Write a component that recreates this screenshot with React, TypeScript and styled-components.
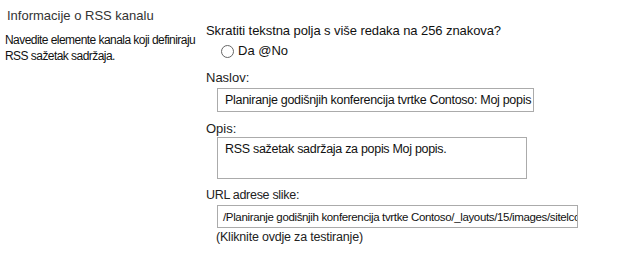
import React from "react";
import styled, { createGlobalStyle } from "styled-components";

const Global = createGlobalStyle`
  html, body { margin: 0; padding: 0; background: #fff; }
  body { font-family: "Liberation Sans", Arial, sans-serif; font-size: 13px; color: #222; }
`;

const Page = styled.div`
  display: flex;
  width: 624px;
  height: 256px;
  overflow: hidden;
`;

const Left = styled.div`
  width: 200px;
  flex: none;
  padding: 8px 0 0 5px;
  box-sizing: border-box;
`;

const SectionTitle = styled.div`
  padding-left: 2px;
  color: #333;
  line-height: 16px;
  margin-bottom: 8px;
`;

const Description = styled.div`
  color: #111;
  line-height: 16px;
  font-size: 12px;
  letter-spacing: -0.55px;
  white-space: nowrap;
`;

const Right = styled.div`
  flex: 1;
  padding: 23px 0 0 6px;
  display: flex;
  flex-direction: column;
`;

const Question = styled.div`
  color: #111;
  line-height: 16px;
  letter-spacing: -0.08px;
`;

const RadioRow = styled.label`
  display: flex;
  align-items: center;
  gap: 4px;
  margin: 4px 0 0 15px;
  line-height: 16px;
  color: #111;
`;

const RadioCircle = styled.span`
  width: 11px;
  height: 11px;
  border-radius: 50%;
  border: 1px solid #666;
  background: #fff;
  flex: none;
`;

const Label = styled.div<{ $top: number; $tight?: boolean }>`
  margin-top: ${(p) => p.$top}px;
  line-height: 16px;
  color: #222;
  font-size: ${(p) => (p.$tight ? "12.5px" : "13px")};
  letter-spacing: ${(p) => (p.$tight ? "-0.3px" : "0")};
`;

const Box = styled.div<{ $w: number; $h: number; $top: number; $small?: boolean }>`
  margin: ${(p) => p.$top}px 0 0 11px;
  width: ${(p) => p.$w}px;
  height: ${(p) => p.$h}px;
  border: 1px solid #ababab;
  box-sizing: border-box;
  padding: ${(p) => (p.$small ? "3px 0 0 5px" : "3px 0 0 7px")};
  white-space: nowrap;
  overflow: hidden;
  color: #111;
  font-size: ${(p) => (p.$small ? "11.5px" : "12.5px")};
  letter-spacing: ${(p) => (p.$small ? "-0.35px" : "-0.3px")};
  line-height: 16px;
  flex: none;
`;

const Hint = styled.div`
  margin: 1px 0 0 10px;
  line-height: 16px;
  color: #222;
  font-size: 12.5px;
  letter-spacing: -0.2px;
`;

export default function App() {
  return (
    <>
      <Global />
      <Page>
        <Left>
          <SectionTitle>Informacije o RSS kanalu</SectionTitle>
          <Description>
            Navedite elemente kanala koji definiraju
            <br />
            RSS sažetak sadržaja.
          </Description>
        </Left>
        <Right>
          <Question>Skratiti tekstna polja s više redaka na 256 znakova?</Question>
          <RadioRow>
            <RadioCircle />
            Da @No
          </RadioRow>
          <Label $top={11}>Naslov:</Label>
          <Box $w={317} $h={24} $top={2}>
            Planiranje godišnjih konferencija tvrtke Contoso: Moj popis
          </Box>
          <Label $top={9}>Opis:</Label>
          <Box $w={310} $h={42} $top={0}>
            RSS sažetak sadržaja za popis Moj popis.
          </Box>
          <Label $top={8} $tight>
            URL adrese slike:
          </Label>
          <Box $w={361} $h={23} $top={2} $small>
            /Planiranje godišnjih konferencija tvrtke Contoso/_layouts/15/images/sitelcc
          </Box>
          <Hint>(Kliknite ovdje za testiranje)</Hint>
        </Right>
      </Page>
    </>
  );
}
